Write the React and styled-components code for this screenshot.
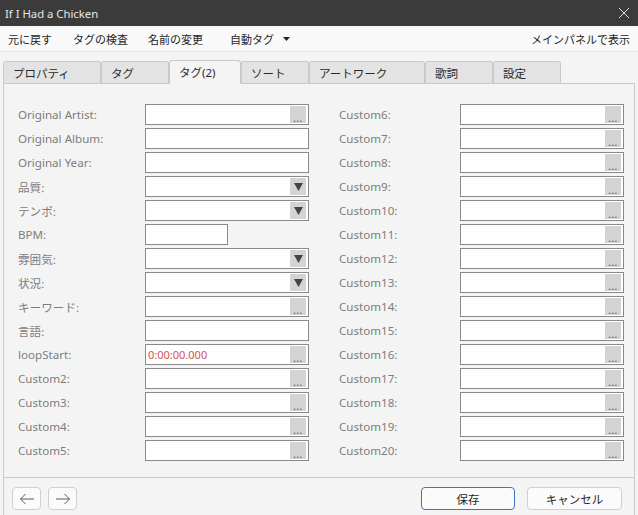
import React from 'react';
import styled, { createGlobalStyle } from 'styled-components';

const GlobalStyle = createGlobalStyle`
  html, body { margin: 0; padding: 0; background: #f4f4f4; }
  body { font-family: "Noto Sans", "Noto Sans CJK JP", sans-serif; }
`;

const Window = styled.div`
  width: 638px;
  height: 515px;
  display: flex;
  flex-direction: column;
  background: #f4f4f4;
  overflow: hidden;
`;

const TitleBar = styled.div`
  height: 26px;
  flex: none;
  background: #3b3b3b;
  color: #e6e6e6;
  display: flex;
  align-items: center;
  justify-content: space-between;
  padding: 0 8px 0 5px;
  font-size: 11.3px;
`;

const MenuBar = styled.div`
  height: 25px;
  flex: none;
  background: #f9f9f9;
  border-bottom: 1px solid #e6e6e6;
  display: flex;
  align-items: center;
  padding: 0 8px;
  font-size: 11px;
  color: #1e1e1e;
`;

const MenuItem = styled.span`
  margin-right: ${p => p.gap || 0}px;
  display: flex;
  align-items: center;
  gap: 9px;
`;

const MenuRight = styled.span`
  margin-left: auto;
`;

const TabStrip = styled.div`
  flex: none;
  display: flex;
  align-items: flex-end;
  height: 23px;
  margin: 8px 3px 0 3px;
`;

const Tab = styled.div`
  width: ${p => p.w}px;
  height: ${p => (p.active ? 24 : 22)}px;
  box-sizing: border-box;
  padding-left: 9px;
  display: flex;
  align-items: center;
  font-size: 11.5px;
  color: #2a2a2a;
  background: ${p => (p.active ? '#f4f4f4' : '#e3e3e3')};
  border: 1px solid #c9c9c9;
  border-bottom: ${p => (p.active ? '1px solid #f4f4f4' : 'none')};
  border-radius: 3px 3px 0 0;
  margin-bottom: ${p => (p.active ? -1 : 0)}px;
  position: relative;
  z-index: ${p => (p.active ? 1 : 0)};
`;

const Panel = styled.div`
  flex: 1;
  display: flex;
  flex-direction: column;
  margin: 0 3px;
  border: 1px solid #c9c9c9;
  border-bottom: none;
  background: #f4f4f4;
`;

const Form = styled.div`
  flex: 1;
  display: grid;
  grid-template-columns: 127px 164px 30px 121px 164px;
  grid-auto-rows: 21px;
  row-gap: 3px;
  padding: 20px 0 0 14px;
  align-items: center;
`;

const Label = styled.div`
  font-size: 11.6px;
  color: #7d7d7d;
  grid-column: ${p => p.col};
`;

const Field = styled.div`
  grid-column: ${p => p.col};
  width: ${p => p.w || 164}px;
  height: 21px;
  box-sizing: border-box;
  border: 1px solid #8a8a8a;
  background: #fff;
  display: flex;
  align-items: center;
  padding: 1px 2px 1px 2px;
`;

const Value = styled.span`
  font-size: 11px;
  color: #d05454;
  flex: 1;
`;

const SideButton = styled.div`
  margin-left: auto;
  width: 16px;
  height: 17px;
  background: #d4d4d4;
  display: flex;
  align-items: ${p => (p.drop ? 'center' : 'flex-end')};
  justify-content: center;
  font-size: 10px;
  line-height: 10px;
  color: #4a4a4a;
  letter-spacing: 0.5px;
`;

const Footer = styled.div`
  flex: none;
  height: 38px;
  box-sizing: border-box;
  border-top: 1px solid #c9c9c9;
  display: flex;
  align-items: flex-start;
  padding: 9px 12px 0 8px;
`;

const Button = styled.button`
  height: 23px;
  width: ${p => p.w}px;
  box-sizing: border-box;
  background: #fbfbfb;
  border: 1px solid ${p => (p.primary ? '#3e74c4' : '#cfcfcf')};
  border-radius: 4px;
  font-family: "Noto Sans", "Noto Sans CJK JP", sans-serif;
  font-size: 11.5px;
  color: #262626;
  display: flex;
  align-items: center;
  justify-content: center;
  padding: 0;
  margin-left: ${p => p.push ? 'auto' : `${p.gap || 0}px`};
`;

const ArrowLeft = () => (
  <svg width="16" height="12" viewBox="0 0 16 12" fill="none" stroke="#5a5a5a" strokeWidth="1">
    <path d="M15 6H1.5M6.5 1L1.5 6l5 5" />
  </svg>
);

const ArrowRight = () => (
  <svg width="16" height="12" viewBox="0 0 16 12" fill="none" stroke="#5a5a5a" strokeWidth="1">
    <path d="M1 6h13.5M9.5 1l5 5-5 5" />
  </svg>
);

const CloseIcon = () => (
  <svg width="12" height="12" viewBox="0 0 12 12" stroke="#dcdcdc" strokeWidth="1">
    <path d="M1 1l10 10M11 1L1 11" />
  </svg>
);

const Caret = () => (
  <svg width="7" height="4" viewBox="0 0 7 4"><path d="M0 0h7L3.5 4z" fill="#222" /></svg>
);

const DropArrow = () => (
  <svg width="9" height="8" viewBox="0 0 9 8"><path d="M0 0h9L4.5 8z" fill="#444" /></svg>
);

const tabs = [
  ['プロパティ', 98], ['タグ', 68], ['タグ(2)', 72], ['ソート', 68],
  ['アートワーク', 116], ['歌詞', 68], ['設定', 68],
];

const leftRows = [
  { label: 'Original Artist:', kind: 'more' },
  { label: 'Original Album:' },
  { label: 'Original Year:' },
  { label: '品質:', kind: 'drop' },
  { label: 'テンポ:', kind: 'drop' },
  { label: 'BPM:', w: 83 },
  { label: '雰囲気:', kind: 'drop' },
  { label: '状況:', kind: 'drop' },
  { label: 'キーワード:', kind: 'more' },
  { label: '言語:' },
  { label: 'loopStart:', kind: 'more', value: '0:00:00.000' },
  { label: 'Custom2:', kind: 'more' },
  { label: 'Custom3:', kind: 'more' },
  { label: 'Custom4:', kind: 'more' },
  { label: 'Custom5:', kind: 'more' },
];

const rightRows = Array.from({ length: 15 }, (_, i) => ({ label: `Custom${i + 6}:`, kind: 'more' }));

const Row = ({ row, labelCol, fieldCol }) => (
  <>
    <Label col={labelCol}>{row.label}</Label>
    <Field col={fieldCol} w={row.w}>
      {row.value && <Value>{row.value}</Value>}
      {row.kind === 'more' && <SideButton>...</SideButton>}
      {row.kind === 'drop' && <SideButton drop><DropArrow /></SideButton>}
    </Field>
  </>
);

export default function App() {
  return (
    <Window>
      <GlobalStyle />
      <TitleBar>
        <span>If I Had a Chicken</span>
        <CloseIcon />
      </TitleBar>
      <MenuBar>
        <MenuItem gap={21}>元に戻す</MenuItem>
        <MenuItem gap={20}>タグの検査</MenuItem>
        <MenuItem gap={27}>名前の変更</MenuItem>
        <MenuItem>自動タグ<Caret /></MenuItem>
        <MenuRight>メインパネルで表示</MenuRight>
      </MenuBar>
      <TabStrip>
        {tabs.map(([name, w], i) => (
          <Tab key={name} w={w} active={i === 2}>{name}</Tab>
        ))}
      </TabStrip>
      <Panel>
        <Form>
          {leftRows.map((row, i) => (
            <React.Fragment key={row.label}>
              <Row row={row} labelCol={1} fieldCol={2} />
              <Row row={rightRows[i]} labelCol={4} fieldCol={5} />
            </React.Fragment>
          ))}
        </Form>
        <Footer>
          <Button w={29}><ArrowLeft /></Button>
          <Button w={29} gap={7}><ArrowRight /></Button>
          <Button w={94} primary push>保存</Button>
          <Button w={95} gap={12}>キャンセル</Button>
        </Footer>
      </Panel>
    </Window>
  );
}
